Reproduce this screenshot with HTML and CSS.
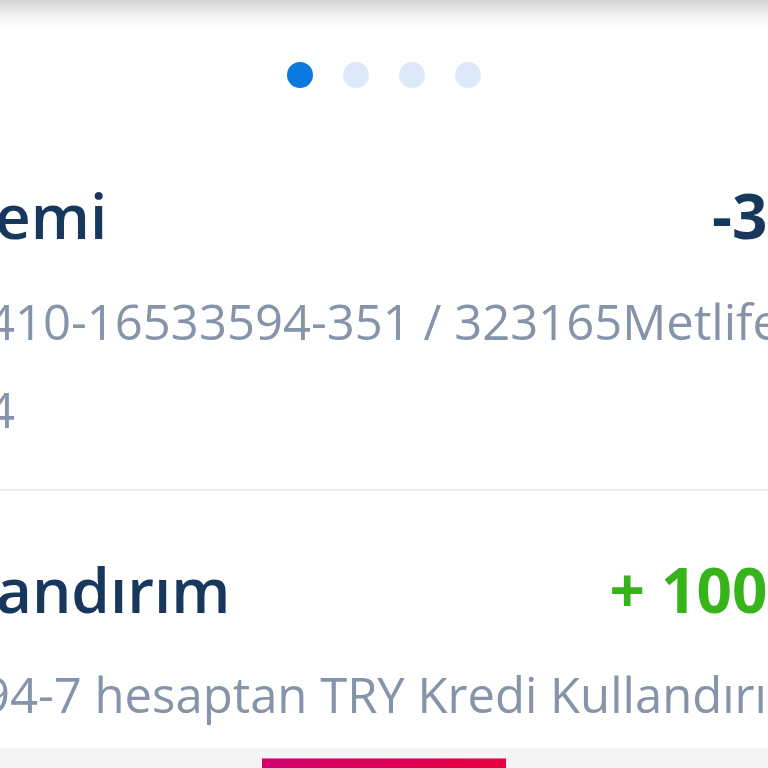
FILE: index.html
```html
<html>
<head>
<meta charset="UTF-8">
<title>Hesap Hareketleri</title>
<meta name="viewport" content="width=device-width,initial-scale=1">
<link rel="stylesheet" href="styles.css">
</head>
<body>
<div class="topShadow"></div>

<div class="pager">
	<span class="dot active"></span>
	<span class="dot"></span>
	<span class="dot"></span>
	<span class="dot"></span>
</div>

<ul class="txList">
	<li class="tx">
		<div class="txHead">
			<span class="txTitle first">emi</span>
			<span class="txAmount">-3.250,00 TL</span>
		</div>
		<div class="txDesc first">410-16533594-351 / 323165Metlife<br>4</div>
	</li>
	<li class="tx">
		<div class="txHead">
			<span class="txTitle second">andırım</span>
			<span class="txAmount plus">+ 100.000,00 TL</span>
		</div>
		<div class="txDesc second">94-7 hesaptan TRY Kredi Kullandırım</div>
	</li>
</ul>

<div class="bottomBar">
	<div class="mainButton"></div>
</div>
</body>
</html>
```

FILE: styles.css
```css
html, body{
	margin:0;
	padding:0;
	overflow:hidden;
	background:white;
}

body{
	font-family:"Open Sans", "Noto Sans", sans-serif;
	width:768px;
}

.topShadow{
	height:28px;
	background:linear-gradient(180deg, #d4d4d4, #f3f3f3 60%, white);
}

.pager{
	display:flex;
	justify-content:center;
	gap:30px;
	padding-top:34px;
	margin-bottom:29px;
}

.dot{
	width:26px;
	height:26px;
	border-radius:50%;
	background:#dde9f8;
}

.dot.active{
	background:#0b78de;
}

.txList{
	list-style:none;
	margin:0;
	padding:0;
}

.tx{
	padding:58px 0 36px;
	border-bottom:2px solid #ececec;
}

.tx:last-child{
	border-bottom:none;
	padding-bottom:10px;
}

.txHead{
	display:flex;
	justify-content:space-between;
	margin-right:-299px;
	white-space:nowrap;
}

.txTitle{
	font-size:62px;
	line-height:80px;
	font-weight:600;
	color:#17375c;
}

.txTitle.first{
	margin-left:-5px;
}

.txTitle.second{
	margin-left:-4px;
}

.txAmount{
	font-size:62px;
	line-height:80px;
	font-weight:700;
	color:#17375c;
}

.txAmount.plus{
	color:#37b41a;
}

.txDesc{
	font-size:49px;
	line-height:88px;
	color:#8594a8;
	white-space:nowrap;
	margin-top:22px;
}

.txDesc.first{
	margin-left:-13px;
}

.txDesc.second{
	margin-left:-18px;
	margin-top:21px;
}

.bottomBar{
	background:#f4f4f4;
	padding-top:10px;
	display:flex;
	justify-content:center;
}

.mainButton{
	width:244px;
	height:40px;
	background:linear-gradient(90deg, #d0006f, #e9003e);
	border-top:1px solid #f06aa8;
}
```
